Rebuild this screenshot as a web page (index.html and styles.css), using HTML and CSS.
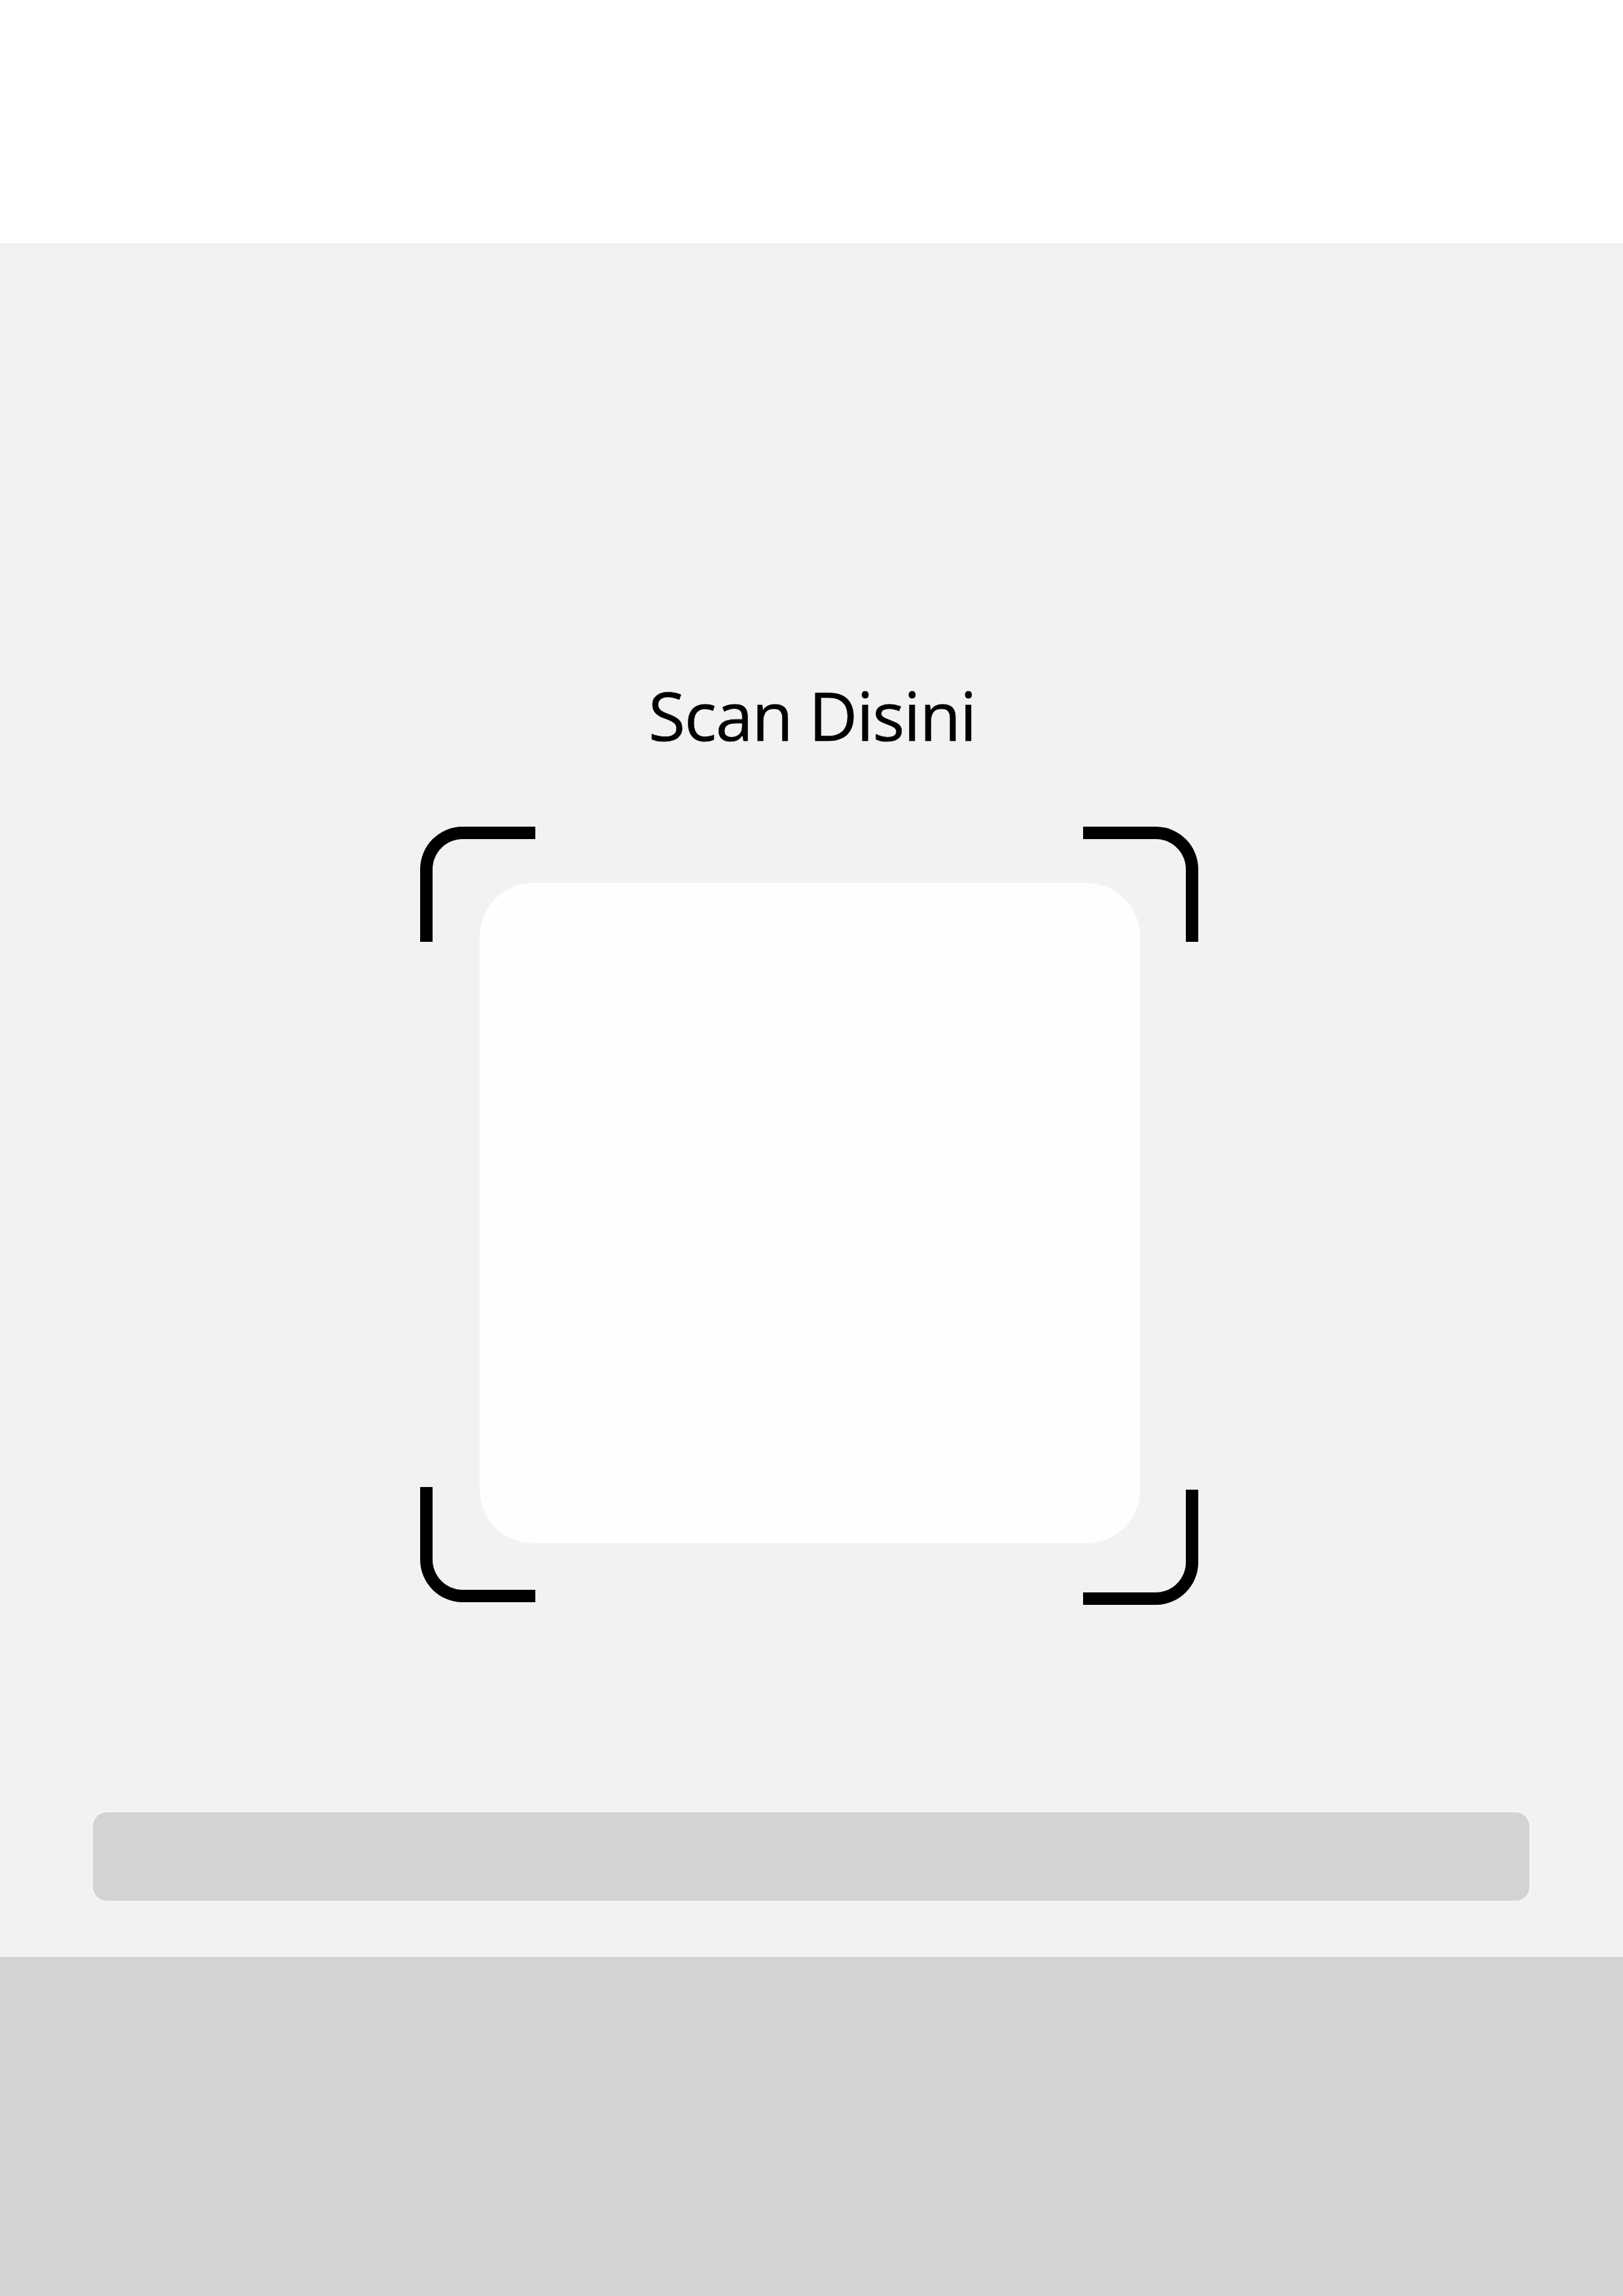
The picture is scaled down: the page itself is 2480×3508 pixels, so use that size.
FILE: index.html
```html
<!DOCTYPE html>
<html lang="id">
<head>
<meta charset="utf-8">
<title>Scan Disini</title>
<link rel="stylesheet" href="styles.css">
</head>
<body>
  <header class="topbar"></header>
  <main class="content">
    <h1 class="title">Scan Disini</h1>
    <div class="scanner">
      <span class="corner corner-tl"></span>
      <span class="corner corner-tr"></span>
      <span class="corner corner-bl"></span>
      <span class="corner corner-br"></span>
      <div class="viewport"></div>
    </div>
    <div class="action-bar"></div>
  </main>
  <footer class="bottom"></footer>
</body>
</html>
```
FILE: styles.css
```css
* { box-sizing: border-box; }
html, body { margin: 0; padding: 0; }
body {
  width: 2480px;
  height: 3508px;
  background: #d3d3d3;
  font-family: "Open Sans", "Noto Sans", sans-serif;
  display: flex;
  flex-direction: column;
  overflow: hidden;
}
.topbar {
  height: 372px;
  flex: none;
  background: #ffffff;
  box-shadow: 0 1px 3px rgba(0, 0, 0, 0.04);
  position: relative;
  z-index: 1;
}
.content {
  height: 2618px;
  flex: none;
  background: #f2f2f2;
  padding-top: 670px;
  display: flex;
  flex-direction: column;
}
.title {
  margin: 0 0 0 2px;
  font-weight: 400;
  font-size: 103px;
  line-height: 100px;
  color: #000;
  text-align: center;
  letter-spacing: -1.6px;
  -webkit-text-stroke: 0.6px #000;
}
.scanner {
  position: relative;
  width: 1189px;
  height: 1189px;
  margin: 121px 0 0 642px;
  padding: 86px 89px 94px 91px;
}
.viewport {
  width: 100%;
  height: 100%;
  background: #fefefe;
  border-radius: 82px;
}
.corner {
  position: absolute;
  width: 176px;
  height: 176px;
  border: 0 solid #000;
}
.corner-tl {
  top: 0; left: 0;
  border-top-width: 19px;
  border-left-width: 19px;
  border-top-left-radius: 65px;
}
.corner-tr {
  top: 0; right: 0;
  border-top-width: 19px;
  border-right-width: 19px;
  border-top-right-radius: 65px;
}
.corner-bl {
  bottom: 4px; left: 0;
  border-bottom-width: 19px;
  border-left-width: 19px;
  border-bottom-left-radius: 65px;
}
.corner-br {
  bottom: 0; right: 0;
  border-bottom-width: 19px;
  border-right-width: 19px;
  border-bottom-right-radius: 65px;
}
.action-bar {
  margin: 317px 0 0 142px;
  width: 2195px;
  height: 135px;
  background: #d3d3d3;
  border-radius: 21px;
  box-shadow: 0 0 3px 2px rgba(255, 255, 255, 0.35);
}
.bottom {
  flex: 1;
  background: #d3d3d3;
}
```
